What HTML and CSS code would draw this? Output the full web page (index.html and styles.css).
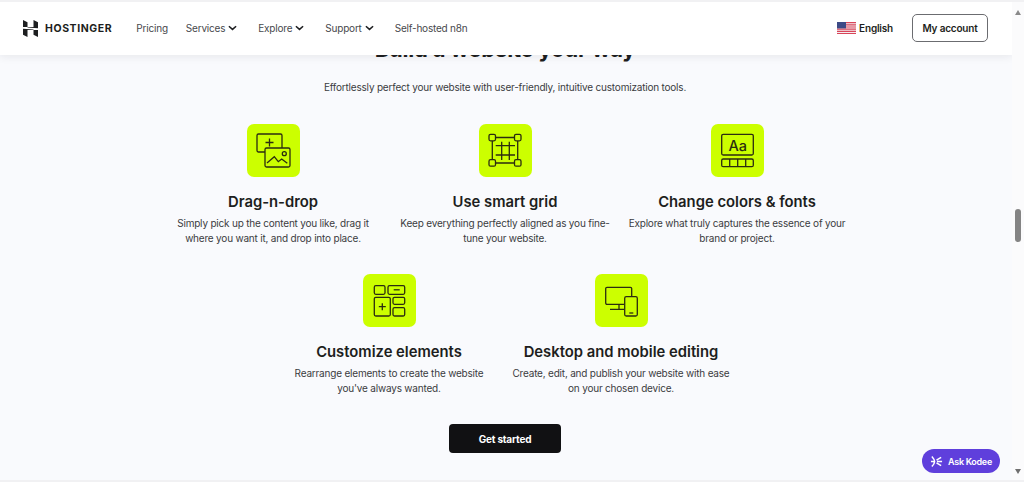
FILE: index.html
```html
<!DOCTYPE html>
<html lang="en">
<head>
<meta charset="utf-8">
<title>Build a website your way</title>
<link rel="stylesheet" href="styles.css">
</head>
<body>
<div class="window">
  <div class="viewport">
    <header class="topbar">
      <a class="logo">
        <svg class="logo-mark" viewBox="0 0 15 17"><path fill="#1d1e20" d="M0 0 L4.500 2.300 V6.900 L0 6.900 Z M10.500 0 L15 2.300 V8.200 L4.500 7.600 V6.900 L10.500 6.900 Z M0 8.800 L10.500 9.400 V10.100 L4.500 10.100 V17 L0 14.700 Z M10.500 10.100 H15 V17 L10.500 14.700 Z"/></svg>
        <span class="logo-text">HOSTINGER</span>
      </a>
      <nav class="nav">
        <a>Pricing</a>
        <a>Services <svg class="chev" viewBox="0 0 10 6"><path d="M1 1l4 3.600L9 1"/></svg></a>
        <a>Explore <svg class="chev" viewBox="0 0 10 6"><path d="M1 1l4 3.600L9 1"/></svg></a>
        <a>Support <svg class="chev" viewBox="0 0 10 6"><path d="M1 1l4 3.600L9 1"/></svg></a>
        <a>Self-hosted n8n</a>
      </nav>
      <div class="top-right">
        <a class="lang">
          <svg class="flag" viewBox="0 0 19 12"><rect width="19" height="12" fill="#f3eef0"/><path fill="#d9455a" d="M0 0h19v1.200H0zM0 2.200h19v1.200H0zM0 4.400h19v1.200H0zM0 6.600h19v1.200H0zM0 8.800h19v1.200H0zM0 10.900h19V12H0z"/><rect width="9" height="6.400" fill="#3d4a86"/></svg>
          English
        </a>
        <a class="account">My account</a>
      </div>
    </header>

    <main class="content">
      <h1 class="headline">Build a website your way</h1>
      <p class="lede">Effortlessly perfect your website with user-friendly, intuitive customization tools.</p>

      <section class="features">
        <article class="feature">
          <div class="tile">
            <svg viewBox="0 0 53 53" class="ico"><path d="M18 28h-6.500a1.500 1.500 0 0 1-1.500-1.500V11.500a1.500 1.500 0 0 1 1.500-1.500h22a1.500 1.500 0 0 1 1.500 1.500V24"/><path d="M22.500 14.500v8M18.500 18.500h8"/><rect x="18" y="24" width="25" height="19" rx="1.500"/><path d="M20 39l7.300-6.300 4 5 3.400-2.700 5.600 4.300"/><circle cx="37.300" cy="29.700" r="2"/></svg>
          </div>
          <h2>Drag-n-drop</h2>
          <p>Simply pick up the content you like, drag it where you want it, and drop into place.</p>
        </article>
        <article class="feature">
          <div class="tile">
            <svg viewBox="0 0 53 53" class="ico"><path d="M16.500 13.500h19M16.500 39h19M13.300 17v19M38.700 17v19"/><path d="M22.700 17.700V36M30.300 17.700V36M16.700 21.700H36M16.700 31H36"/><rect x="10" y="10.300" width="6.500" height="6.500" rx="1.500"/><rect x="35.500" y="10.300" width="6.500" height="6.500" rx="1.500"/><rect x="10" y="35.700" width="6.500" height="6.500" rx="1.500"/><rect x="35.500" y="35.700" width="6.500" height="6.500" rx="1.500"/></svg>
          </div>
          <h2>Use smart grid</h2>
          <p>Keep everything perfectly aligned as you fine-tune your website.</p>
        </article>
        <article class="feature">
          <div class="tile">
            <svg viewBox="0 0 53 53" class="ico"><rect x="10.700" y="10.300" width="31.600" height="20.700" rx="1.500"/><rect x="10.700" y="35" width="31.600" height="7.700" rx="1.500"/><path d="M18.700 35v7.700M26.700 35v7.700M34.700 35v7.700"/><text x="26.700" y="26.700" class="ico-text">Aa</text></svg>
          </div>
          <h2>Change colors &amp; fonts</h2>
          <p>Explore what truly captures the essence of your brand or project.</p>
        </article>
        <article class="feature">
          <div class="tile">
            <svg viewBox="0 0 53 53" class="ico"><rect x="11.300" y="11.700" width="10.700" height="8.600" rx="1.500"/><rect x="25" y="11.700" width="16.700" height="8.600" rx="1.500"/><path d="M30.700 15.800h6"/><rect x="11.300" y="23.300" width="16" height="18.700" rx="1.500"/><path d="M19.300 29.200v7M15.800 32.700h7"/><rect x="30" y="23.300" width="11.700" height="7" rx="1.500"/><rect x="30" y="33.700" width="11.700" height="8.300" rx="1.500"/></svg>
          </div>
          <h2>Customize elements</h2>
          <p>Rearrange elements to create the website you've always wanted.</p>
        </article>
        <article class="feature">
          <div class="tile">
            <svg viewBox="0 0 53 53" class="ico"><path d="M29 30.300H12a1.300 1.300 0 0 1-1.300-1.300V14.600a1.300 1.300 0 0 1 1.300-1.300h23.400a1.300 1.300 0 0 1 1.300 1.300v8"/><path d="M24 30.300v5M15 35.300h14"/><rect x="29.700" y="22.700" width="12.600" height="19.300" rx="1.500"/><path d="M34.300 39h4"/></svg>
          </div>
          <h2>Desktop and mobile editing</h2>
          <p>Create, edit, and publish your website with ease on your chosen device.</p>
        </article>
      </section>

      <div class="cta-row"><a class="cta">Get started</a></div>
    </main>

    <a class="kodee">
      <svg class="kodee-ico" viewBox="0 0 14 14"><path d="M2 1.500c1.800 2 3 3.700 3 5.500s-1.200 3.500-3 5.500M1 7h4M7.500 7h5.500M7 5.500L12 2.500M7 8.500l5 3"/></svg>
      Ask Kodee
    </a>
  </div>
  <aside class="scrollbar">
    <span class="arrow up"></span>
    <span class="thumb"></span>
    <span class="arrow down"></span>
  </aside>
</div>
</body>
</html>
```
FILE: styles.css
```css
* { box-sizing: border-box; }
html, body { margin: 0; height: 100%; }
body {
  font-family: "Inter", "Liberation Sans", sans-serif;
  color: #1d1e20;
  background: #f1f1f3;
  overflow: hidden;
  letter-spacing: -0.2px;
}
.window {
  display: flex;
  height: 482px;
  padding-top: 2px;
  padding-bottom: 2px;
}
.viewport {
  flex: 1;
  position: relative;
  overflow: hidden;
  background: #f9fafd;
}
.scrollbar {
  width: 12px;
  background: #fbfbfc;
  display: flex;
  flex-direction: column;
  align-items: center;
  padding: 8px 0 6px;
}
.arrow { width: 0; height: 0; border-left: 3.5px solid transparent; border-right: 3.5px solid transparent; }
.arrow.up { border-bottom: 5px solid #8a8a8a; }
.arrow.down { border-top: 5px solid #6f6f6f; margin-top: auto; }
.thumb {
  width: 6px;
  height: 33px;
  margin-top: 194px;
  border-radius: 3px;
  background: #848484;
}

.topbar {
  position: absolute;
  top: 0; left: 0; right: 0;
  height: 53px;
  background: #fff;
  display: flex;
  align-items: center;
  padding: 0 24px 1px 23px;
  box-shadow: 0 2px 8px rgba(29,30,32,.08);
  z-index: 2;
}
.logo { display: flex; align-items: center; gap: 7px; }
.logo-mark { width: 15px; height: 17px; }
.logo-text { font-size: 10.5px; font-weight: 700; letter-spacing: 0.6px; color: #1d1e20; }
.nav {
  display: flex;
  align-items: center;
  gap: 21px;
  margin-left: 24px;
  font-size: 10px;
  color: #47484c;
}
.nav a { display: flex; align-items: center; gap: 3px; white-space: nowrap; }
.nav a:first-child { margin-right: -3px; }
.chev { width: 9px; height: 6px; fill: none; stroke: #1d1e20; stroke-width: 1.7; }
.top-right { margin-left: auto; display: flex; align-items: center; gap: 19px; }
.lang { display: flex; align-items: center; gap: 3px; font-size: 10px; font-weight: 600; }
.flag { width: 19px; height: 12px; }
.account {
  width: 76px; height: 28px;
  border: 1px solid #6b6c70;
  border-radius: 5px;
  display: flex; align-items: center; justify-content: center;
  font-size: 10px; font-weight: 600;
}

.content { padding: 35px 2px 0 0; text-align: center; }
.headline { margin: 0; font-size: 22px; line-height: 24px; font-weight: 700; color: #1d1e20; }
.lede { margin: 18px 0 0; font-size: 10px; line-height: 16px; color: #3b3c3f; }
.features {
  display: flex;
  flex-wrap: wrap;
  justify-content: center;
  column-gap: 14px;
  width: 696px;
  margin: 29px auto 0;
}
.feature { width: 218px; height: 150px; display: flex; flex-direction: column; align-items: center; }
.tile {
  width: 53px; height: 53px;
  border-radius: 7px;
  background: #ccff00;
}
.ico { display: block; width: 53px; height: 53px; fill: none; stroke: #2b2d10; stroke-width: 1.3; }
.ico-text { font-size: 14.500px; font-weight: 500; letter-spacing: 0; text-anchor: middle; fill: #2b2d10; stroke: none; }
.feature h2 { margin: 16px 0 0; font-size: 14.8px; line-height: 18px; font-weight: 600; letter-spacing: 0; }
.feature p { margin: 5px 0 0; font-size: 10px; line-height: 15px; color: #3b3c3f; }
.cta-row { display: flex; justify-content: center; }
.cta {
  width: 112px; height: 29px;
  background: #111113;
  color: #fff;
  border-radius: 4px;
  display: flex; align-items: center; justify-content: center;
  font-size: 10px; font-weight: 700;
}
.kodee {
  position: absolute;
  left: 922px; top: 447px;
  width: 78px; height: 24px;
  border-radius: 12px;
  background: #5f3fdc;
  color: #fff;
  font-size: 9px; font-weight: 600;
  letter-spacing: -0.3px;
  display: flex; align-items: center; justify-content: center;
  gap: 5px;
}
.kodee-ico { width: 13px; height: 13px; fill: none; stroke: #fff; stroke-width: 1.6; }
```
